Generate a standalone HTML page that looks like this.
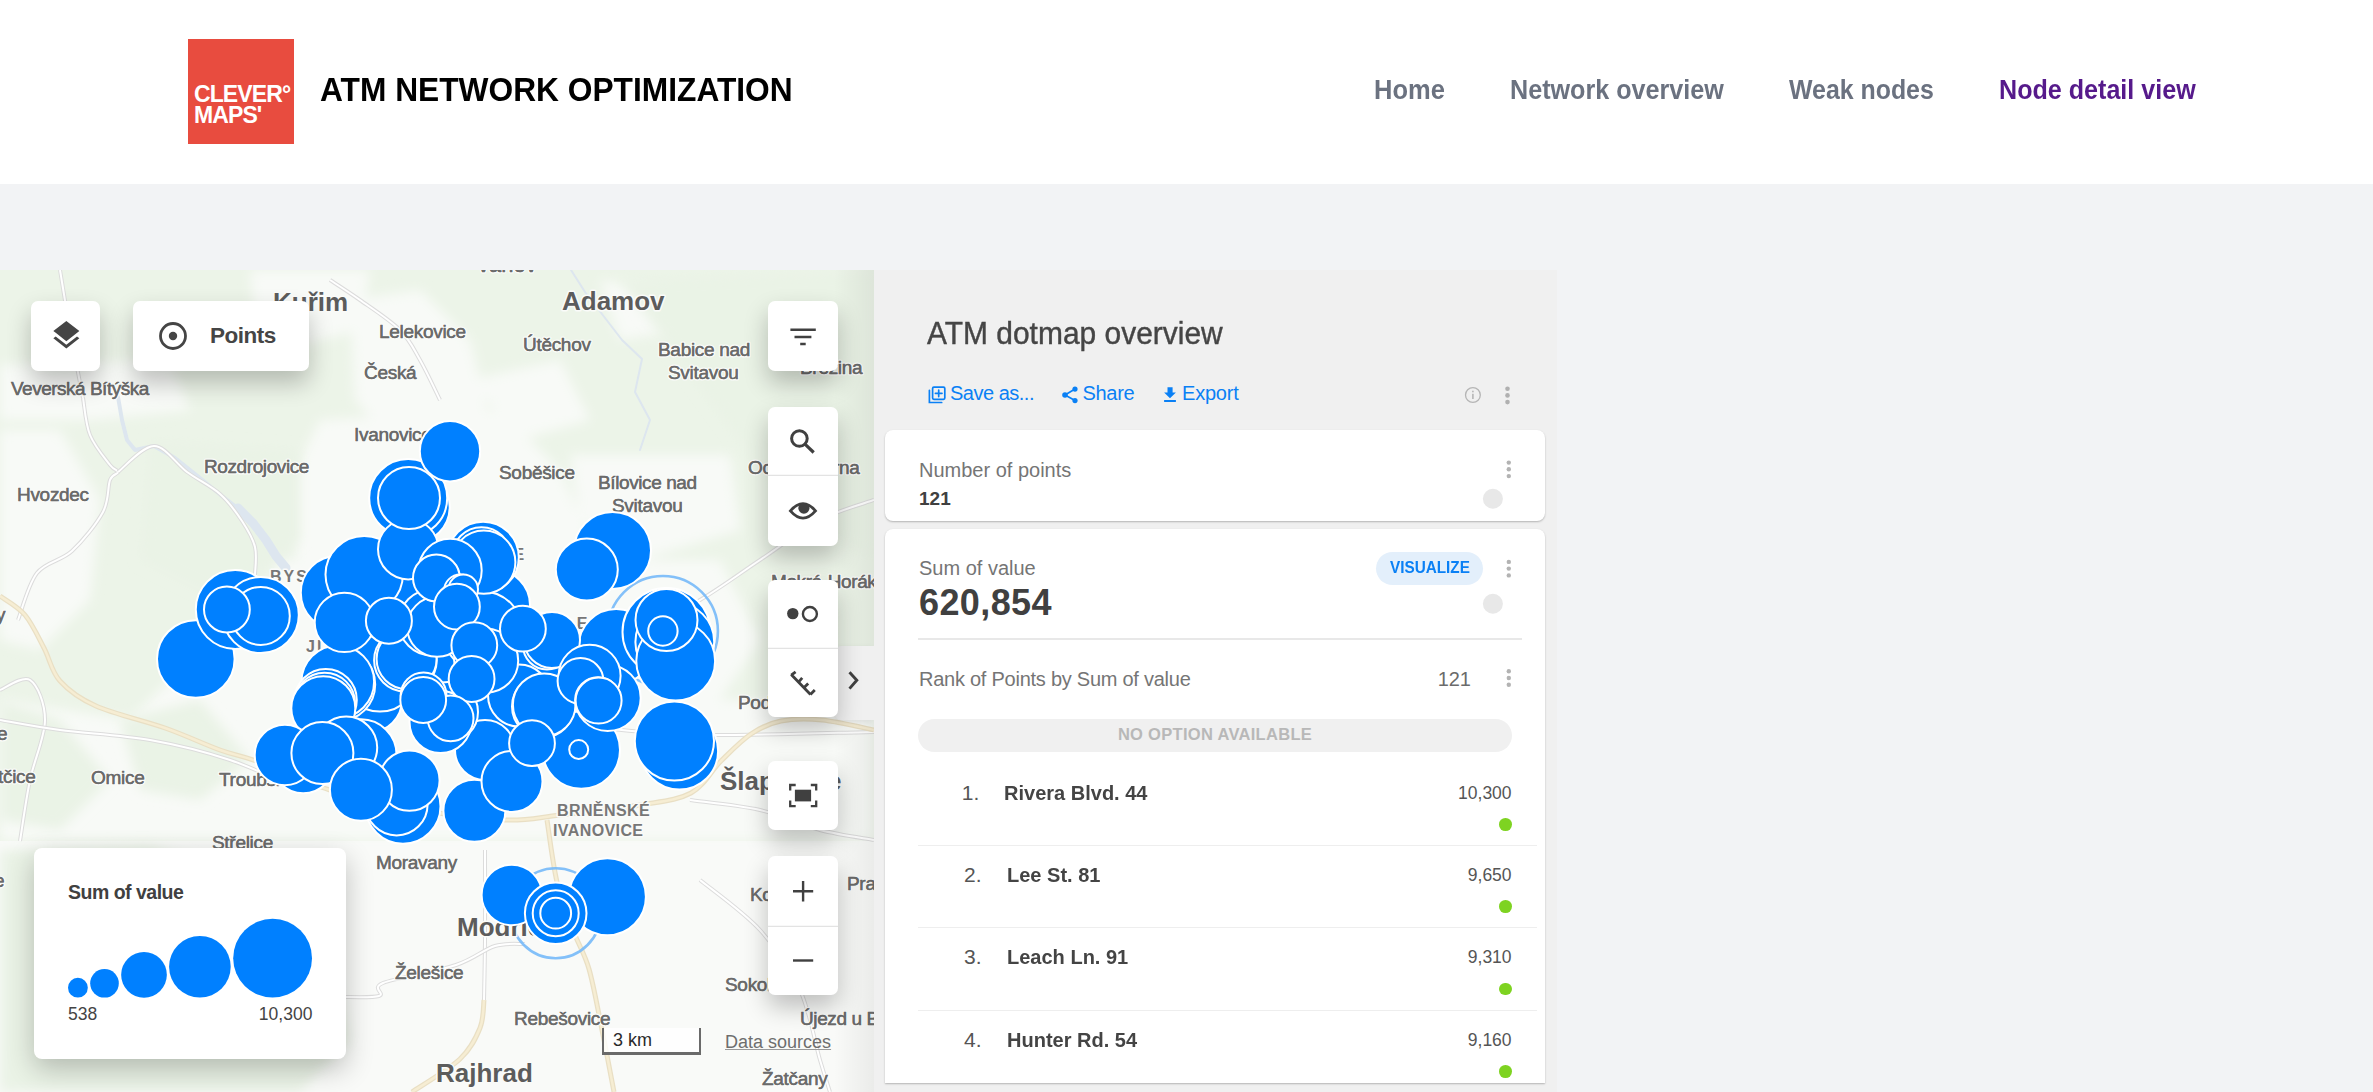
<!DOCTYPE html>
<html><head><meta charset="utf-8">
<style>
*{box-sizing:border-box;margin:0;padding:0}
html,body{width:2373px;height:1092px;overflow:hidden;background:#f2f3f5;font-family:"Liberation Sans",sans-serif}
.abs{position:absolute}
#hdr{position:absolute;left:0;top:0;width:2373px;height:184px;background:#fff}
#logo{position:absolute;left:188px;top:39px;width:106px;height:105px;background:#e84c3f}
#logo span{position:absolute;left:6px;color:#fff;font-weight:bold;font-size:23px;letter-spacing:-0.9px;line-height:22px}
#title{position:absolute;left:320px;top:70px;font-size:33px;font-weight:bold;color:#000;white-space:nowrap;line-height:40px;transform:scaleX(0.961);transform-origin:0 0}
.nav{position:absolute;top:73.5px;font-size:27.5px;font-weight:bold;color:#6b7280;white-space:nowrap;line-height:32px;transform-origin:0 0}
#map{position:absolute;left:0;top:270px;width:874px;height:822px;overflow:hidden;background:#f4f7f2}
#panel{position:absolute;left:874px;top:270px;width:683px;height:822px;background:#f0f0f0;overflow:hidden}
.btn{position:absolute;background:#fff;border-radius:7px;box-shadow:0 12px 24px rgba(0,0,0,0.24)}
.card{position:absolute;left:11px;width:660px;background:#fff;border-radius:8px;box-shadow:0 1px 2px rgba(0,0,0,0.25)}
.t{position:absolute;white-space:nowrap}
</style></head><body>
<div id="hdr">
  <div id="logo"><span style="top:44px">CLEVER°</span><span style="top:64.5px">MAPS'</span></div>
  <div id="title">ATM NETWORK OPTIMIZATION</div>
  <div class="nav" style="left:1374px;transform:scaleX(0.927)">Home</div>
  <div class="nav" style="left:1510px;transform:scaleX(0.914)">Network overview</div>
  <div class="nav" style="left:1789px;transform:scaleX(0.905)">Weak nodes</div>
  <div class="nav" style="left:1999px;color:#561a8b;transform:scaleX(0.913)">Node detail view</div>
</div>

<div id="map"><svg class="abs" style="left:0;top:0" width="874" height="822" viewBox="0 0 874 822"><defs><filter id="blr" x="-10%" y="-10%" width="120%" height="120%"><feGaussianBlur stdDeviation="6"/></filter></defs><rect x="0" y="0" width="874" height="822" fill="#f9faf8"/><rect x="0" y="0" width="874" height="571" fill="#ecf4e8"/><g fill="#f8faf7" filter="url(#blr)"><path d="M250,0 L370,0 L360,60 L300,75 L255,50Z"/><path d="M350,30 L420,20 L470,70 L490,150 L460,200 L400,180 L355,130Z"/><path d="M320,150 L500,140 L560,200 L600,290 L560,330 L300,330 L290,210Z"/><path d="M0,95 L170,90 L190,140 L90,150 L0,150Z"/><path d="M0,160 L60,160 L100,230 L90,330 L40,380 L0,370Z"/><path d="M570,185 L730,185 L740,260 L640,290 L580,250Z"/><path d="M280,290 L720,290 L760,370 L720,430 L874,430 L874,571 L0,571 L0,430 L130,450 L200,380 L260,330Z"/><path d="M600,10 L700,30 L680,60 L620,70Z"/><path d="M470,110 L560,90 L590,150 L520,170Z"/></g><g fill="#eaf3e6" filter="url(#blr)"><path d="M0,580 L150,575 L260,610 L330,680 L350,770 L300,822 L0,822Z"/><path d="M0,430 L60,450 L110,510 L60,560 L0,550Z"/><path d="M120,450 L200,430 L250,490 L200,530 L140,520Z"/><path d="M620,10 L874,0 L874,290 L800,250 L760,200Z"/><path d="M150,170 L300,180 L300,270 L220,330 L140,290Z"/></g><g fill="none" stroke="#dde6ef" stroke-linecap="round" stroke-linejoin="round"><path d="M118,397 L122,420 L127,440 L135,450 L154,446 L175,458 L200,478 L222,496 L240,510" stroke-width="4" transform="translate(0,-270)"/><path d="M238,508 L253,523 L266,540 L276,556 L286,568" stroke-width="9" transform="translate(0,-270)"/><path d="M571,270 L585,292 L622,340 L642,359 L635,392 L650,420 L640,450" stroke-width="2" transform="translate(0,-270)"/></g><path d="M83,128 C84.2,134.2 85.5,153.8 90,165 C94.5,176.2 105.3,188.8 110,195 C114.7,201.2 118.0,199.5 118,202 C118.0,204.5 112.5,203.3 110,210 C107.5,216.7 109.3,230.2 103,242 C96.7,253.8 83.0,270.8 72,281 C61.0,291.2 46.0,291.5 37,303 C28.0,314.5 21.2,342.2 18,350" fill="none" stroke="#dcdcdc" stroke-width="4"/><path d="M83,128 C84.2,134.2 85.5,153.8 90,165 C94.5,176.2 105.3,188.8 110,195 C114.7,201.2 118.0,199.5 118,202 C118.0,204.5 112.5,203.3 110,210 C107.5,216.7 109.3,230.2 103,242 C96.7,253.8 83.0,270.8 72,281 C61.0,291.2 46.0,291.5 37,303 C28.0,314.5 21.2,342.2 18,350" fill="none" stroke="#ffffff" stroke-width="2"/><path d="M118,202 C124.0,197.7 142.5,176.0 154,176 C165.5,176.0 176.0,194.0 187,202 C198.0,210.0 210.8,215.8 220,224 C229.2,232.2 236.2,242.2 242,251 C247.8,259.8 252.8,268.0 255,277 C257.2,286.0 255.0,300.3 255,305" fill="none" stroke="#dcdcdc" stroke-width="4"/><path d="M118,202 C124.0,197.7 142.5,176.0 154,176 C165.5,176.0 176.0,194.0 187,202 C198.0,210.0 210.8,215.8 220,224 C229.2,232.2 236.2,242.2 242,251 C247.8,259.8 252.8,268.0 255,277 C257.2,286.0 255.0,300.3 255,305" fill="none" stroke="#ffffff" stroke-width="2"/><path d="M60,0 C61.7,10.0 66.2,38.7 70,60 C73.8,81.3 80.8,116.7 83,128" fill="none" stroke="#dcdcdc" stroke-width="4"/><path d="M60,0 C61.7,10.0 66.2,38.7 70,60 C73.8,81.3 80.8,116.7 83,128" fill="none" stroke="#ffffff" stroke-width="2"/><path d="M0,420 C5.0,418.3 22.5,405.0 30,410 C37.5,415.0 45.0,433.3 45,450 C45.0,466.7 34.2,489.8 30,510 C25.8,530.2 21.7,560.8 20,571" fill="none" stroke="#dcdcdc" stroke-width="4"/><path d="M0,420 C5.0,418.3 22.5,405.0 30,410 C37.5,415.0 45.0,433.3 45,450 C45.0,466.7 34.2,489.8 30,510 C25.8,530.2 21.7,560.8 20,571" fill="none" stroke="#ffffff" stroke-width="2"/><path d="M330,10 C335.0,13.3 348.3,21.7 360,30 C371.7,38.3 390.0,50.0 400,60 C410.0,70.0 413.3,78.3 420,90 C426.7,101.7 436.7,123.3 440,130" fill="none" stroke="#dcdcdc" stroke-width="4"/><path d="M330,10 C335.0,13.3 348.3,21.7 360,30 C371.7,38.3 390.0,50.0 400,60 C410.0,70.0 413.3,78.3 420,90 C426.7,101.7 436.7,123.3 440,130" fill="none" stroke="#ffffff" stroke-width="2"/><path d="M690,530 C701.7,531.7 738.3,535.0 760,540 C781.7,545.0 801.0,555.0 820,560 C839.0,565.0 865.0,568.3 874,570" fill="none" stroke="#dcdcdc" stroke-width="4"/><path d="M690,530 C701.7,531.7 738.3,535.0 760,540 C781.7,545.0 801.0,555.0 820,560 C839.0,565.0 865.0,568.3 874,570" fill="none" stroke="#ffffff" stroke-width="2"/><path d="M485,580 C485.0,595.0 485.2,645.0 485,670 C484.8,695.0 484.2,720.0 484,730" fill="none" stroke="#dcdcdc" stroke-width="4"/><path d="M485,580 C485.0,595.0 485.2,645.0 485,670 C484.8,695.0 484.2,720.0 484,730" fill="none" stroke="#ffffff" stroke-width="2"/><path d="M340,727 C346.5,726.8 371.8,728.3 379,726 C386.2,723.7 370.2,718.2 383,713 C395.8,707.8 437.3,701.2 456,695 C474.7,688.8 483.5,679.5 495,676 C506.5,672.5 520.0,674.3 525,674" fill="none" stroke="#dcdcdc" stroke-width="4"/><path d="M340,727 C346.5,726.8 371.8,728.3 379,726 C386.2,723.7 370.2,718.2 383,713 C395.8,707.8 437.3,701.2 456,695 C474.7,688.8 483.5,679.5 495,676 C506.5,672.5 520.0,674.3 525,674" fill="none" stroke="#ffffff" stroke-width="2"/><path d="M700,610 C710.0,618.3 743.3,641.7 760,660 C776.7,678.3 790.0,698.3 800,720 C810.0,741.7 815.0,773.0 820,790 C825.0,807.0 828.3,816.7 830,822" fill="none" stroke="#dcdcdc" stroke-width="4"/><path d="M700,610 C710.0,618.3 743.3,641.7 760,660 C776.7,678.3 790.0,698.3 800,720 C810.0,741.7 815.0,773.0 820,790 C825.0,807.0 828.3,816.7 830,822" fill="none" stroke="#ffffff" stroke-width="2"/><path d="M640,360 C650.0,355.0 680.0,341.7 700,330 C720.0,318.3 740.0,303.3 760,290 C780.0,276.7 801.0,260.0 820,250 C839.0,240.0 865.0,233.3 874,230" fill="none" stroke="#dcdcdc" stroke-width="4"/><path d="M640,360 C650.0,355.0 680.0,341.7 700,330 C720.0,318.3 740.0,303.3 760,290 C780.0,276.7 801.0,260.0 820,250 C839.0,240.0 865.0,233.3 874,230" fill="none" stroke="#ffffff" stroke-width="2"/><path d="M600,458 C616.7,459.2 654.3,464.3 700,465 C745.7,465.7 845.0,462.5 874,462" fill="none" stroke="#dcdcdc" stroke-width="4"/><path d="M600,458 C616.7,459.2 654.3,464.3 700,465 C745.7,465.7 845.0,462.5 874,462" fill="none" stroke="#ffffff" stroke-width="2"/><path d="M0,450 C10.0,451.7 35.0,456.7 60,460 C85.0,463.3 121.7,465.0 150,470 C178.3,475.0 205.0,481.7 230,490 C255.0,498.3 288.3,515.0 300,520" fill="none" stroke="#dcdcdc" stroke-width="4"/><path d="M0,450 C10.0,451.7 35.0,456.7 60,460 C85.0,463.3 121.7,465.0 150,470 C178.3,475.0 205.0,481.7 230,490 C255.0,498.3 288.3,515.0 300,520" fill="none" stroke="#ffffff" stroke-width="2"/><path d="M0,326 C4.2,329.2 17.7,336.3 25,345 C32.3,353.7 38.2,367.0 44,378 C49.8,389.0 51.3,401.3 60,411 C68.7,420.7 78.5,428.2 96,436 C113.5,443.8 144.3,450.7 165,458 C185.7,465.3 204.8,474.5 220,480 C235.2,485.5 237.7,484.3 256,491 C274.3,497.7 302.7,511.8 330,520 C357.3,528.2 390.8,535.0 420,540 C449.2,545.0 481.7,549.2 505,550 C528.3,550.8 537.5,547.5 560,545 C582.5,542.5 618.2,538.7 640,535 C661.8,531.3 677.5,530.3 691,523 C704.5,515.7 711.0,500.8 721,491 C731.0,481.2 741.0,470.7 751,464 C761.0,457.3 769.2,453.3 781,451 C792.8,448.7 806.5,448.5 822,450 C837.5,451.5 865.3,458.3 874,460" fill="none" stroke="#e9dfc4" stroke-width="5"/><path d="M0,326 C4.2,329.2 17.7,336.3 25,345 C32.3,353.7 38.2,367.0 44,378 C49.8,389.0 51.3,401.3 60,411 C68.7,420.7 78.5,428.2 96,436 C113.5,443.8 144.3,450.7 165,458 C185.7,465.3 204.8,474.5 220,480 C235.2,485.5 237.7,484.3 256,491 C274.3,497.7 302.7,511.8 330,520 C357.3,528.2 390.8,535.0 420,540 C449.2,545.0 481.7,549.2 505,550 C528.3,550.8 537.5,547.5 560,545 C582.5,542.5 618.2,538.7 640,535 C661.8,531.3 677.5,530.3 691,523 C704.5,515.7 711.0,500.8 721,491 C731.0,481.2 741.0,470.7 751,464 C761.0,457.3 769.2,453.3 781,451 C792.8,448.7 806.5,448.5 822,450 C837.5,451.5 865.3,458.3 874,460" fill="none" stroke="#f6edd3" stroke-width="2.5"/><path d="M547,550 C548.7,560.3 552.7,593.7 557,612 C561.3,630.3 567.7,645.5 573,660 C578.3,674.5 584.2,682.3 589,699 C593.8,715.7 597.8,739.5 602,760 C606.2,780.5 612.0,811.7 614,822" fill="none" stroke="#e9dfc4" stroke-width="5"/><path d="M547,550 C548.7,560.3 552.7,593.7 557,612 C561.3,630.3 567.7,645.5 573,660 C578.3,674.5 584.2,682.3 589,699 C593.8,715.7 597.8,739.5 602,760 C606.2,780.5 612.0,811.7 614,822" fill="none" stroke="#f6edd3" stroke-width="2.5"/><path d="M484,730 C483.3,734.7 484.0,748.2 480,758 C476.0,767.8 471.3,778.3 460,789 C448.7,799.7 420.0,816.5 412,822" fill="none" stroke="#e9dfc4" stroke-width="5"/><path d="M484,730 C483.3,734.7 484.0,748.2 480,758 C476.0,767.8 471.3,778.3 460,789 C448.7,799.7 420.0,816.5 412,822" fill="none" stroke="#f6edd3" stroke-width="2.5"/><g fill="none" stroke="#76b9f8" stroke-width="2.6" opacity="0.9"><circle cx="662.9" cy="361.0" r="55.0"/><circle cx="555.7" cy="643.2" r="45.0"/></g><g font-family="Liberation Sans, sans-serif" stroke="#fafbf9" stroke-width="3" paint-order="stroke" stroke-linejoin="round"><text x="478" y="2" font-size="22" font-weight="normal" fill="#6b6b6b" letter-spacing="0">vanov</text><text x="273" y="41" font-size="26" font-weight="bold" fill="#5c5c5c" letter-spacing="0">Kuřim</text><text x="562" y="40" font-size="26" font-weight="bold" fill="#5c5c5c" letter-spacing="0">Adamov</text><text x="379" y="68" font-size="19" font-weight="normal" fill="#6b6b6b" letter-spacing="-0.3">Lelekovice</text><text x="523" y="81" font-size="19" font-weight="normal" fill="#6b6b6b" letter-spacing="-0.3">Útěchov</text><text x="658" y="86" font-size="19" font-weight="normal" fill="#6b6b6b" letter-spacing="-0.3">Babice nad</text><text x="668" y="109" font-size="19" font-weight="normal" fill="#6b6b6b" letter-spacing="-0.3">Svitavou</text><text x="800" y="104" font-size="19" font-weight="normal" fill="#6b6b6b" letter-spacing="-0.3">Březina</text><text x="364" y="109" font-size="19" font-weight="normal" fill="#6b6b6b" letter-spacing="-0.3">Česká</text><text x="11" y="125" font-size="19" font-weight="normal" fill="#6b6b6b" letter-spacing="-0.5">Veverská Bítýška</text><text x="354" y="171" font-size="19" font-weight="normal" fill="#6b6b6b" letter-spacing="-0.3">Ivanovice</text><text x="204" y="203" font-size="19" font-weight="normal" fill="#6b6b6b" letter-spacing="-0.4">Rozdrojovice</text><text x="499" y="209" font-size="19" font-weight="normal" fill="#6b6b6b" letter-spacing="-0.3">Soběšice</text><text x="598" y="219" font-size="19" font-weight="normal" fill="#6b6b6b" letter-spacing="-0.4">Bílovice nad</text><text x="612" y="242" font-size="19" font-weight="normal" fill="#6b6b6b" letter-spacing="-0.3">Svitavou</text><text x="17" y="231" font-size="19" font-weight="normal" fill="#6b6b6b" letter-spacing="-0.3">Hvozdec</text><text x="748" y="204" font-size="19" font-weight="normal" fill="#6b6b6b" letter-spacing="-0.4">Ochoz u Brna</text><text x="270" y="312" font-size="16" font-weight="bold" fill="#777" letter-spacing="2">BYSTRC</text><text x="306" y="382" font-size="16" font-weight="bold" fill="#777" letter-spacing="2">JI</text><text x="500" y="290" font-size="16" font-weight="bold" fill="#777" letter-spacing="2">ŘE</text><text x="565" y="359" font-size="16" font-weight="bold" fill="#777" letter-spacing="2">LE</text><text x="771" y="318" font-size="19" font-weight="normal" fill="#6b6b6b" letter-spacing="-0.4">Mokrá-Horákov</text><text x="738" y="439" font-size="19" font-weight="normal" fill="#6b6b6b" letter-spacing="-0.3">Podolí</text><text x="720" y="520" font-size="26" font-weight="bold" fill="#5c5c5c" letter-spacing="0">Šlapanice</text><text x="-2" y="513" font-size="19" font-weight="normal" fill="#6b6b6b" letter-spacing="-0.3">tčice</text><text x="91" y="514" font-size="19" font-weight="normal" fill="#6b6b6b" letter-spacing="-0.3">Omice</text><text x="219" y="516" font-size="19" font-weight="normal" fill="#6b6b6b" letter-spacing="-0.3">Troubsko</text><text x="212" y="579" font-size="19" font-weight="normal" fill="#6b6b6b" letter-spacing="-0.3">Střelice</text><text x="557" y="546" font-size="16" font-weight="bold" fill="#777" letter-spacing="0.4">BRNĚNSKÉ</text><text x="553" y="566" font-size="16" font-weight="bold" fill="#777" letter-spacing="0.4">IVANOVICE</text><text x="376" y="599" font-size="19" font-weight="normal" fill="#6b6b6b" letter-spacing="-0.3">Moravany</text><text x="750" y="631" font-size="19" font-weight="normal" fill="#6b6b6b" letter-spacing="-0.3">Kobylnice</text><text x="847" y="620" font-size="19" font-weight="normal" fill="#6b6b6b" letter-spacing="-0.3">Prace</text><text x="457" y="666" font-size="26" font-weight="bold" fill="#5c5c5c" letter-spacing="0">Modřice</text><text x="395" y="709" font-size="19" font-weight="normal" fill="#6b6b6b" letter-spacing="-0.3">Želešice</text><text x="725" y="721" font-size="19" font-weight="normal" fill="#6b6b6b" letter-spacing="-0.3">Sokolnice</text><text x="514" y="755" font-size="19" font-weight="normal" fill="#6b6b6b" letter-spacing="-0.3">Rebešovice</text><text x="800" y="755" font-size="19" font-weight="normal" fill="#6b6b6b" letter-spacing="-0.4">Újezd u Brna</text><text x="436" y="812" font-size="26" font-weight="bold" fill="#5c5c5c" letter-spacing="0">Rajhrad</text><text x="762" y="815" font-size="19" font-weight="normal" fill="#6b6b6b" letter-spacing="-0.3">Žatčany</text><text x="-3" y="470" font-size="19" font-weight="normal" fill="#6b6b6b" letter-spacing="0">e</text><text x="-6" y="617" font-size="19" font-weight="normal" fill="#6b6b6b" letter-spacing="0">e</text><text x="-4" y="351" font-size="19" font-weight="normal" fill="#6b6b6b" letter-spacing="0">y</text></g><g font-family="Liberation Sans, sans-serif"><text x="478" y="2" font-size="22" fill="#6b6b6b" stroke="#6b6b6b" stroke-width="0.35" letter-spacing="0">vanov</text><text x="379" y="68" font-size="19" fill="#6b6b6b" stroke="#6b6b6b" stroke-width="0.35" letter-spacing="-0.3">Lelekovice</text><text x="523" y="81" font-size="19" fill="#6b6b6b" stroke="#6b6b6b" stroke-width="0.35" letter-spacing="-0.3">Útěchov</text><text x="658" y="86" font-size="19" fill="#6b6b6b" stroke="#6b6b6b" stroke-width="0.35" letter-spacing="-0.3">Babice nad</text><text x="668" y="109" font-size="19" fill="#6b6b6b" stroke="#6b6b6b" stroke-width="0.35" letter-spacing="-0.3">Svitavou</text><text x="800" y="104" font-size="19" fill="#6b6b6b" stroke="#6b6b6b" stroke-width="0.35" letter-spacing="-0.3">Březina</text><text x="364" y="109" font-size="19" fill="#6b6b6b" stroke="#6b6b6b" stroke-width="0.35" letter-spacing="-0.3">Česká</text><text x="11" y="125" font-size="19" fill="#6b6b6b" stroke="#6b6b6b" stroke-width="0.35" letter-spacing="-0.5">Veverská Bítýška</text><text x="354" y="171" font-size="19" fill="#6b6b6b" stroke="#6b6b6b" stroke-width="0.35" letter-spacing="-0.3">Ivanovice</text><text x="204" y="203" font-size="19" fill="#6b6b6b" stroke="#6b6b6b" stroke-width="0.35" letter-spacing="-0.4">Rozdrojovice</text><text x="499" y="209" font-size="19" fill="#6b6b6b" stroke="#6b6b6b" stroke-width="0.35" letter-spacing="-0.3">Soběšice</text><text x="598" y="219" font-size="19" fill="#6b6b6b" stroke="#6b6b6b" stroke-width="0.35" letter-spacing="-0.4">Bílovice nad</text><text x="612" y="242" font-size="19" fill="#6b6b6b" stroke="#6b6b6b" stroke-width="0.35" letter-spacing="-0.3">Svitavou</text><text x="17" y="231" font-size="19" fill="#6b6b6b" stroke="#6b6b6b" stroke-width="0.35" letter-spacing="-0.3">Hvozdec</text><text x="748" y="204" font-size="19" fill="#6b6b6b" stroke="#6b6b6b" stroke-width="0.35" letter-spacing="-0.4">Ochoz u Brna</text><text x="771" y="318" font-size="19" fill="#6b6b6b" stroke="#6b6b6b" stroke-width="0.35" letter-spacing="-0.4">Mokrá-Horákov</text><text x="738" y="439" font-size="19" fill="#6b6b6b" stroke="#6b6b6b" stroke-width="0.35" letter-spacing="-0.3">Podolí</text><text x="-2" y="513" font-size="19" fill="#6b6b6b" stroke="#6b6b6b" stroke-width="0.35" letter-spacing="-0.3">tčice</text><text x="91" y="514" font-size="19" fill="#6b6b6b" stroke="#6b6b6b" stroke-width="0.35" letter-spacing="-0.3">Omice</text><text x="219" y="516" font-size="19" fill="#6b6b6b" stroke="#6b6b6b" stroke-width="0.35" letter-spacing="-0.3">Troubsko</text><text x="212" y="579" font-size="19" fill="#6b6b6b" stroke="#6b6b6b" stroke-width="0.35" letter-spacing="-0.3">Střelice</text><text x="376" y="599" font-size="19" fill="#6b6b6b" stroke="#6b6b6b" stroke-width="0.35" letter-spacing="-0.3">Moravany</text><text x="750" y="631" font-size="19" fill="#6b6b6b" stroke="#6b6b6b" stroke-width="0.35" letter-spacing="-0.3">Kobylnice</text><text x="847" y="620" font-size="19" fill="#6b6b6b" stroke="#6b6b6b" stroke-width="0.35" letter-spacing="-0.3">Prace</text><text x="395" y="709" font-size="19" fill="#6b6b6b" stroke="#6b6b6b" stroke-width="0.35" letter-spacing="-0.3">Želešice</text><text x="725" y="721" font-size="19" fill="#6b6b6b" stroke="#6b6b6b" stroke-width="0.35" letter-spacing="-0.3">Sokolnice</text><text x="514" y="755" font-size="19" fill="#6b6b6b" stroke="#6b6b6b" stroke-width="0.35" letter-spacing="-0.3">Rebešovice</text><text x="800" y="755" font-size="19" fill="#6b6b6b" stroke="#6b6b6b" stroke-width="0.35" letter-spacing="-0.4">Újezd u Brna</text><text x="762" y="815" font-size="19" fill="#6b6b6b" stroke="#6b6b6b" stroke-width="0.35" letter-spacing="-0.3">Žatčany</text><text x="-3" y="470" font-size="19" fill="#6b6b6b" stroke="#6b6b6b" stroke-width="0.35" letter-spacing="0">e</text><text x="-6" y="617" font-size="19" fill="#6b6b6b" stroke="#6b6b6b" stroke-width="0.35" letter-spacing="0">e</text><text x="-4" y="351" font-size="19" fill="#6b6b6b" stroke="#6b6b6b" stroke-width="0.35" letter-spacing="0">y</text></g><g fill="#0080ff" stroke="#fff" stroke-width="2"><circle cx="495.0" cy="335.0" r="35.0"/><circle cx="430.0" cy="395.0" r="35.0"/><circle cx="500.0" cy="445.0" r="35.0"/><circle cx="545.0" cy="398.0" r="35.0"/><circle cx="540.0" cy="378.0" r="35.0"/><circle cx="400.0" cy="320.0" r="30.0"/><circle cx="485.0" cy="480.0" r="30.0"/><circle cx="380.0" cy="385.0" r="30.0"/><circle cx="370.0" cy="430.0" r="32.0"/><circle cx="405.0" cy="320.0" r="28.0"/><circle cx="482.6" cy="361.4" r="40.0"/><circle cx="535.7" cy="381.6" r="39.4"/><circle cx="519.0" cy="425.5" r="31.0"/><circle cx="448.0" cy="442.0" r="30.0"/><circle cx="380.0" cy="403.6" r="38.0"/><circle cx="195.8" cy="389.0" r="38.8"/><circle cx="235.2" cy="339.5" r="39.4"/><circle cx="260.8" cy="345.0" r="38.0"/><circle cx="413.7" cy="237.0" r="36.0"/><circle cx="408.2" cy="228.0" r="39.0"/><circle cx="337.8" cy="322.8" r="37.0"/><circle cx="364.2" cy="304.6" r="38.7"/><circle cx="338.6" cy="414.5" r="36.6"/><circle cx="337.8" cy="411.8" r="36.3"/><circle cx="483.1" cy="287.4" r="35.7"/><circle cx="581.3" cy="480.0" r="38.7"/><circle cx="616.2" cy="376.5" r="37.5"/><circle cx="607.7" cy="428.0" r="33.0"/><circle cx="666.5" cy="361.9" r="44.0"/><circle cx="674.8" cy="372.0" r="39.4"/><circle cx="675.7" cy="391.0" r="39.4"/><circle cx="612.5" cy="280.4" r="38.5"/><circle cx="679.4" cy="480.9" r="38.7"/><circle cx="674.4" cy="471.0" r="39.6"/><circle cx="360.9" cy="485.0" r="35.7"/><circle cx="403.0" cy="536.2" r="37.5"/><circle cx="607.4" cy="626.7" r="38.5"/><circle cx="450.0" cy="181.2" r="30.2"/><circle cx="408.2" cy="279.2" r="30.2"/><circle cx="409.0" cy="228.0" r="31.0"/><circle cx="260.8" cy="345.9" r="29.0"/><circle cx="344.4" cy="352.4" r="29.7"/><circle cx="325.8" cy="430.0" r="31.0"/><circle cx="324.6" cy="433.2" r="30.5"/><circle cx="323.3" cy="438.2" r="32.0"/><circle cx="405.4" cy="390.3" r="31.3"/><circle cx="406.6" cy="389.0" r="30.0"/><circle cx="431.8" cy="352.4" r="33.0"/><circle cx="437.1" cy="356.8" r="30.0"/><circle cx="481.5" cy="286.5" r="29.3"/><circle cx="483.8" cy="292.2" r="31.6"/><circle cx="450.1" cy="300.4" r="31.6"/><circle cx="486.2" cy="390.7" r="32.0"/><circle cx="440.4" cy="451.2" r="30.2"/><circle cx="440.5" cy="452.0" r="31.0"/><circle cx="547.0" cy="375.6" r="24.0"/><circle cx="552.0" cy="370.0" r="28.0"/><circle cx="543.0" cy="436.5" r="31.0"/><circle cx="544.2" cy="434.7" r="31.3"/><circle cx="589.6" cy="405.8" r="31.0"/><circle cx="666.5" cy="350.0" r="31.0"/><circle cx="586.8" cy="299.6" r="31.0"/><circle cx="346.2" cy="477.6" r="31.0"/><circle cx="303.2" cy="492.3" r="31.0"/><circle cx="284.9" cy="485.0" r="30.2"/><circle cx="322.4" cy="483.1" r="31.0"/><circle cx="396.6" cy="534.4" r="31.0"/><circle cx="409.4" cy="510.6" r="30.2"/><circle cx="360.9" cy="519.7" r="31.0"/><circle cx="474.4" cy="540.8" r="31.0"/><circle cx="512.0" cy="511.4" r="30.5"/><circle cx="511.8" cy="625.0" r="30.2"/><circle cx="226.9" cy="339.5" r="22.9"/><circle cx="436.8" cy="308.3" r="22.9"/><circle cx="436.4" cy="308.0" r="23.4"/><circle cx="460.4" cy="321.0" r="16.5"/><circle cx="463.3" cy="319.3" r="14.7"/><circle cx="456.9" cy="336.7" r="22.9"/><circle cx="474.3" cy="375.2" r="22.9"/><circle cx="471.6" cy="409.0" r="22.9"/><circle cx="423.6" cy="425.5" r="22.9"/><circle cx="450.6" cy="448.3" r="22.9"/><circle cx="423.2" cy="430.0" r="22.9"/><circle cx="388.9" cy="350.8" r="23.0"/><circle cx="522.9" cy="358.7" r="22.9"/><circle cx="580.5" cy="410.9" r="22.9"/><circle cx="598.0" cy="430.1" r="22.9"/><circle cx="598.6" cy="430.6" r="23.0"/><circle cx="532.0" cy="473.2" r="22.9"/><circle cx="578.7" cy="479.6" r="9.5"/><circle cx="662.9" cy="361.0" r="14.7"/><circle cx="555.7" cy="643.2" r="30.8"/><circle cx="555.7" cy="643.2" r="23.0"/><circle cx="555.7" cy="643.2" r="15.4"/></g></svg><div class="abs" style="left:834px;top:0;width:40px;height:822px;background:linear-gradient(to right,rgba(0,0,0,0),rgba(0,0,0,0.06))"></div><div class="btn" style="left:31px;top:31px;width:69px;height:70px;"><svg class="abs" style="left:17.6px;top:17.1px" width="34.7" height="34.7" viewBox="0 0 24 24"><path fill="#454545" d="M11.99 18.54l-7.37-5.73L3 14.07l9 7 9-7-1.63-1.27-7.38 5.74zM12 16l9-7-9-7-9 7 1.63 1.27L12 16z"/></svg></div><div class="btn" style="left:133px;top:31px;width:176px;height:70px;"><svg class="abs" style="left:0;top:0" width="176" height="70"><circle cx="40" cy="35" r="12.5" fill="none" stroke="#454545" stroke-width="2.8"/><circle cx="40" cy="35" r="4.2" fill="#454545"/></svg><div class="t" style="left:77px;top:21px;font-size:22.5px;font-weight:bold;color:#454545;line-height:28px;letter-spacing:-0.5px">Points</div></div><div class="btn" style="left:768px;top:31px;width:70px;height:70px;"><svg class="abs" style="left:0;top:0" width="70" height="70"><g stroke="#404040" stroke-width="2.5"><path d="M22.4 28.8H47.8M26.5 35.9H43.4M32.2 43H37.7"/></g></svg></div><div class="btn" style="left:768px;top:137px;width:70px;height:139px;"><svg class="abs" style="left:0;top:0" width="70" height="139"><circle cx="31.4" cy="31.5" r="7.8" fill="none" stroke="#404040" stroke-width="3"/><path d="M37 37.2L45.7 45.5" stroke="#404040" stroke-width="3.2"/><rect x="0" y="67.8" width="70" height="1" fill="#dddddd"/><defs><clipPath id="eyeclip"><path d="M22.4 103.9Q35 89.5 47.5 103.9Q35 118.3 22.4 103.9Z"/></clipPath></defs><path d="M22.4 103.9Q35 89.5 47.5 103.9Q35 118.3 22.4 103.9Z" fill="none" stroke="#404040" stroke-width="2.8" stroke-linejoin="miter"/><circle cx="35.9" cy="101.1" r="5.6" fill="#404040" clip-path="url(#eyeclip)"/></svg></div><div class="abs" style="left:835px;top:376px;width:39px;height:74px;background:#f0f0f0;border-radius:6px 0 0 6px;box-shadow:-2px 2px 6px rgba(0,0,0,0.08)"><svg class="abs" style="left:0;top:0" width="39" height="74"><path d="M14.5 26.2L21.8 34.3L14.5 42.6" fill="none" stroke="#404040" stroke-width="2.9"/></svg></div><div class="btn" style="left:768px;top:310px;width:70px;height:137px;"><svg class="abs" style="left:0;top:0" width="70" height="137"><circle cx="24.8" cy="33.6" r="5.7" fill="#404040"/><circle cx="41.9" cy="34" r="7" fill="none" stroke="#404040" stroke-width="2.4"/><rect x="0" y="67.8" width="70" height="1" fill="#dddddd"/><path d="M23.2 94.6L42.5 114.4M23.2 95.2L27.6 91.9M31.4 101.2L34.2 97.9M36.9 106.7L40.2 103.4M42.4 114.4L46.8 110" fill="none" stroke="#404040" stroke-width="2.8"/></svg></div><div class="btn" style="left:768px;top:491px;width:70px;height:69px;"><svg class="abs" style="left:0;top:0" width="70" height="69"><g fill="none" stroke="#404040" stroke-width="2.3"><path d="M22.2 29.5V24H27.7M42.8 24H48.2V29.5M48.2 39.6V45.2H42.8M27.7 45.2H22.2V39.6"/></g><rect x="26.9" y="28.7" width="16.2" height="11.7" fill="#404040"/></svg></div><div class="btn" style="left:768px;top:586px;width:70px;height:139px;"><svg class="abs" style="left:0;top:0" width="70" height="139"><g stroke="#404040" stroke-width="2.4"><path d="M25 35.2H45.2M35.1 25V45.4"/><path d="M25 104.5H45.2"/></g><rect x="0" y="69.8" width="70" height="1" fill="#dddddd"/></svg></div><div class="btn" style="left:34px;top:578px;width:312px;height:211px;border-radius:8px;box-shadow:0 10px 28px rgba(0,0,0,0.24)"><svg class="abs" style="left:0;top:0" width="312" height="211"><g fill="#0080ff"><circle cx="43.9" cy="139.7" r="9.9"/><circle cx="70.5" cy="135.3" r="14.3"/><circle cx="110" cy="126.8" r="22.85"/><circle cx="165.9" cy="118.8" r="30.8"/><circle cx="238.6" cy="110.2" r="39.4"/></g></svg><div class="t" style="left:34px;top:32px;font-size:19.5px;font-weight:bold;color:#404040;line-height:24px;letter-spacing:-0.5px">Sum of value</div><div class="t" style="left:34px;top:155px;font-size:17.5px;color:#444;line-height:22px">538</div><div class="t" style="left:0;width:278.4px;text-align:right;top:155px;font-size:17.5px;color:#444;line-height:22px">10,300</div></div><div class="abs" style="left:602px;top:758px;width:99px;height:27px;border:2.5px solid #6a6a6a;border-top:none;border-bottom-width:3px;background:rgba(255,255,255,0.8)"></div><div class="t" style="left:613px;top:759px;font-size:18px;color:#2a2a2a;line-height:22px">3 km</div><div class="t" style="left:725px;top:761px;font-size:18px;color:#6e6e6e;line-height:22px;text-decoration:underline;text-decoration-color:#999">Data sources</div></div>
<div id="panel">
  <div class="t" style="left:53px;top:44.5px;font-size:31px;color:#454545;line-height:38px;transform:scaleX(0.966);transform-origin:0 0;-webkit-text-stroke:0.4px #454545">ATM dotmap overview</div>
  <div class="t" style="left:76px;top:111px;font-size:20px;color:#0a80f5;line-height:24px;letter-spacing:-0.5px">Save as...</div>
  <div class="t" style="left:208.5px;top:111px;font-size:20px;color:#0a80f5;line-height:24px;letter-spacing:-0.3px">Share</div>
  <div class="t" style="left:308px;top:111px;font-size:20px;color:#0a80f5;line-height:24px;letter-spacing:-0.2px">Export</div>


  <svg class="abs" style="left:0;top:0" width="683" height="160" viewBox="874 270 683 160">
    <g fill="none" stroke="#0a80f5" stroke-width="1.7" stroke-linecap="round">
      <rect x="932.6" y="387.2" width="12.2" height="12.2" rx="1.3"/>
      <path d="M938.7 390v6.6M935.4 393.3h6.6M929.4 390.3v12.2h12.3"/>
      <path d="M1075 389.1L1065 395L1075 400.6"/>
    </g>
    <g fill="#0a80f5">
      <circle cx="1075" cy="389.1" r="2.6"/><circle cx="1065" cy="395" r="2.8"/><circle cx="1075" cy="400.6" r="2.6"/>
      <path d="M1167.5 387.3h5.1v5.1h3.3L1170 398.2L1164.1 392.4h3.4z"/>
      <rect x="1164.1" y="400" width="11.8" height="2"/>
    </g>
    <circle cx="1472.9" cy="395" r="7.4" fill="none" stroke="#b5b5b5" stroke-width="1.3"/>
    <rect x="1472.1" y="390.7" width="1.6" height="1.6" fill="#b5b5b5"/>
    <rect x="1472.1" y="393.8" width="1.6" height="5.2" fill="#b5b5b5"/>
    <g fill="#b0b0b0"><circle cx="1507.5" cy="388.7" r="2.3"/><circle cx="1507.5" cy="395.4" r="2.3"/><circle cx="1507.5" cy="402.1" r="2.3"/></g>
  </svg>
  <div class="card" style="top:160px;height:91px">
    <svg class="abs" style="left:0;top:0" width="660" height="91"><g fill="#b3b3b3"><circle cx="623.8" cy="32.6" r="2.2"/><circle cx="623.8" cy="39.3" r="2.2"/><circle cx="623.8" cy="46.1" r="2.2"/></g><circle cx="607.9" cy="68.8" r="10" fill="#e8e8e8"/></svg>
    <div class="t" style="left:34px;top:28px;font-size:20px;color:#757575;line-height:24px">Number of points</div>
    <div class="t" style="left:34px;top:57px;font-size:19px;font-weight:bold;color:#404040;line-height:24px">121</div>
  </div>
  <div class="card" style="top:259px;height:554px;border-radius:8px 8px 0 0">
    <div class="t" style="left:34px;top:27px;font-size:20px;color:#757575;line-height:24px">Sum of value</div>
    <div class="t" style="left:34px;top:52px;font-size:36px;font-weight:bold;color:#404040;line-height:44px;letter-spacing:0.4px">620,854</div>
    <svg class="abs" style="left:0;top:0" width="660" height="160"><g fill="#b3b3b3"><circle cx="623.8" cy="32.9" r="2.2"/><circle cx="623.8" cy="39.6" r="2.2"/><circle cx="623.8" cy="46.4" r="2.2"/><circle cx="623.8" cy="142.3" r="2.2"/><circle cx="623.8" cy="149" r="2.2"/><circle cx="623.8" cy="155.8" r="2.2"/></g><circle cx="607.9" cy="74.8" r="10" fill="#e8e8e8"/></svg>
    <div class="abs" style="left:491px;top:23px;width:107px;height:33px;border-radius:17px;background:#e3effb"></div>
    <div class="t" style="left:505px;top:28px;font-size:17px;font-weight:bold;color:#0a80f5;line-height:22px;transform:scaleX(0.9);transform-origin:0 0">VISUALIZE</div>
    <div class="abs" style="left:33px;top:109px;width:604px;height:2px;background:#e8e8e8"></div>
    <div class="t" style="left:34px;top:138px;font-size:20px;color:#757575;line-height:24px;letter-spacing:-0.25px">Rank of Points by Sum of value</div>
    <div class="t" style="left:0;width:586px;text-align:right;top:138px;font-size:20px;color:#6b6b6b;line-height:24px">121</div>
    <div class="abs" style="left:33px;top:190px;width:594px;height:33px;border-radius:17px;background:#f0f0f0"></div>
    <div class="t" style="left:33px;width:594px;text-align:center;top:193.5px;font-size:16.5px;font-weight:bold;color:#b8b8b8;line-height:22px;letter-spacing:0.3px">NO OPTION AVAILABLE</div>
    <div class="t" style="left:76.8px;top:250.8px;font-size:21px;color:#555;line-height:26px">1.</div>
    <div class="t" style="left:118.5px;top:250.8px;font-size:21px;font-weight:bold;color:#444;line-height:26px;transform:scaleX(0.953);transform-origin:0 0">Rivera Blvd. 44</div>
    <div class="t" style="left:0;width:626.6px;text-align:right;top:252.8px;font-size:17.5px;color:#555;line-height:22px">10,300</div>
    <div class="abs" style="left:614.0px;top:289.1px;width:12.8px;height:12.8px;border-radius:50%;background:#7ed321"></div>
    <div class="abs" style="left:33px;top:316.0px;width:619px;height:1px;background:#eeeeee"></div>
    <div class="t" style="left:79.0px;top:333.1px;font-size:21px;color:#555;line-height:26px">2.</div>
    <div class="t" style="left:121.8px;top:333.1px;font-size:21px;font-weight:bold;color:#444;line-height:26px;transform:scaleX(0.953);transform-origin:0 0">Lee St. 81</div>
    <div class="t" style="left:0;width:626.6px;text-align:right;top:335.1px;font-size:17.5px;color:#555;line-height:22px">9,650</div>
    <div class="abs" style="left:614.0px;top:371.4px;width:12.8px;height:12.8px;border-radius:50%;background:#7ed321"></div>
    <div class="abs" style="left:33px;top:398.3px;width:619px;height:1px;background:#eeeeee"></div>
    <div class="t" style="left:79.0px;top:415.4px;font-size:21px;color:#555;line-height:26px">3.</div>
    <div class="t" style="left:121.8px;top:415.4px;font-size:21px;font-weight:bold;color:#444;line-height:26px;transform:scaleX(0.953);transform-origin:0 0">Leach Ln. 91</div>
    <div class="t" style="left:0;width:626.6px;text-align:right;top:417.4px;font-size:17.5px;color:#555;line-height:22px">9,310</div>
    <div class="abs" style="left:614.0px;top:453.7px;width:12.8px;height:12.8px;border-radius:50%;background:#7ed321"></div>
    <div class="abs" style="left:33px;top:480.6px;width:619px;height:1px;background:#eeeeee"></div>
    <div class="t" style="left:79.0px;top:497.7px;font-size:21px;color:#555;line-height:26px">4.</div>
    <div class="t" style="left:121.8px;top:497.7px;font-size:21px;font-weight:bold;color:#444;line-height:26px;transform:scaleX(0.953);transform-origin:0 0">Hunter Rd. 54</div>
    <div class="t" style="left:0;width:626.6px;text-align:right;top:499.7px;font-size:17.5px;color:#555;line-height:22px">9,160</div>
    <div class="abs" style="left:614.0px;top:536.0px;width:12.8px;height:12.8px;border-radius:50%;background:#7ed321"></div>
  </div>
</div>
</body></html>
